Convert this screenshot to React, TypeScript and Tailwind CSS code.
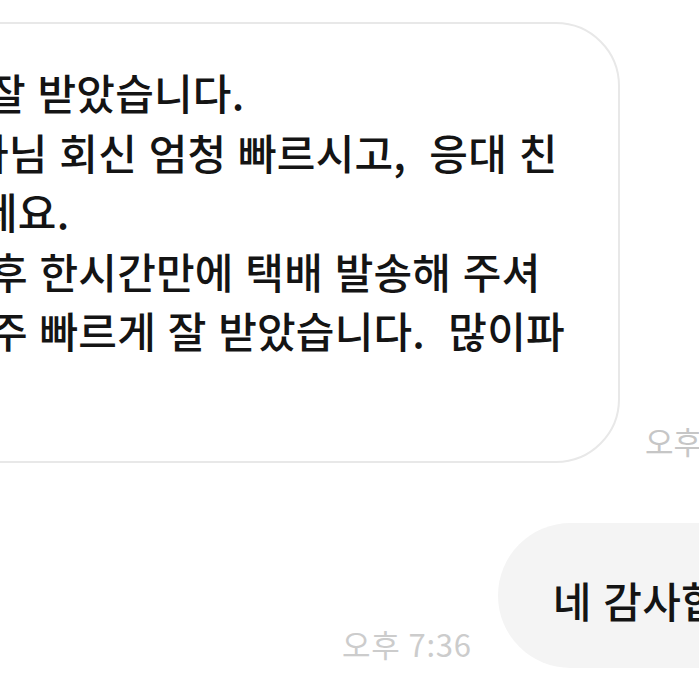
import React from "react";

const lines = [
  { text: "잘 받았습니다.", shift: "ml-[-13px]" },
  { text: "자님 회신 엄청 빠르시고,  응대 친", shift: "ml-[-30px]" },
  { text: "세요.", shift: "ml-[-21px]" },
  { text: "후 한시간만에 택배 발송해 주셔", shift: "ml-[-11px]" },
  { text: "주 빠르게 잘 받았습니다.  많이파", shift: "ml-[-11px]" },
];

export default function App() {
  return (
    <div
      className="w-[699px] h-[699px] overflow-hidden bg-white pt-[22px]"
      style={{ fontFamily: '"Noto Sans CJK KR", "Noto Sans", sans-serif' }}
    >
      {/* received message */}
      <div className="flex items-end">
        <div className="ml-[-60px] w-[680px] h-[441px] shrink-0 rounded-[64px] border-2 border-[#e8e8e8] bg-white pt-[38px] pl-[58px]">
          {lines.map((l, i) => (
            <div
              key={i}
              className={`${l.shift} whitespace-pre text-[42px] font-medium leading-[59.5px] text-[#141414] [word-spacing:2px] tracking-[0.2px]`}
            >
              {l.text}
            </div>
          ))}
        </div>
        <div className="ml-[25px] mb-[4px] whitespace-nowrap text-[31px] leading-[36px] text-[#c6c6c6]">
          오후
        </div>
      </div>

      {/* sent message */}
      <div className="mt-[60px] flex items-end">
        <div className="ml-[342px] mb-[6px] whitespace-nowrap text-[31px] tracking-[0.8px] leading-[36px] text-[#cccccc]">
          오후 7:36
        </div>
        <div className="ml-[26px] h-[145px] w-[320px] shrink-0 rounded-full bg-[#f4f4f4] pl-[55px] flex items-center">
          <span className="whitespace-nowrap pt-[8px] text-[42px] font-medium text-[#141414] [word-spacing:2px] tracking-[0.2px]">
            네 감사합니다
          </span>
        </div>
      </div>
    </div>
  );
}
